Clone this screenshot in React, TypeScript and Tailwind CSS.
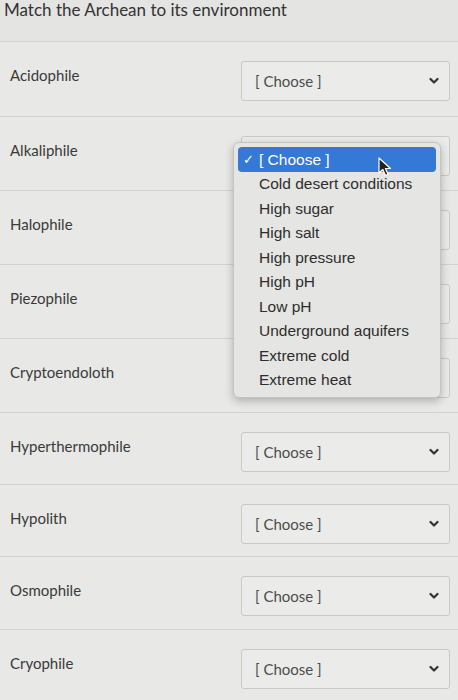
const rows = [
  { name: "Acidophile", h: "h-[75px]" },
  { name: "Alkaliphile", h: "h-[74px]" },
  { name: "Halophile", h: "h-[74px]" },
  { name: "Piezophile", h: "h-[74px]" },
  { name: "Cryptoendoloth", h: "h-[74px]" },
  { name: "Hyperthermophile", h: "h-[72px]" },
  { name: "Hypolith", h: "h-[72px]" },
  { name: "Osmophile", h: "h-[73px]" },
  { name: "Cryophile", h: "h-[73px]" },
];

const options = [
  "Cold desert conditions",
  "High sugar",
  "High salt",
  "High pressure",
  "High pH",
  "Low pH",
  "Underground aquifers",
  "Extreme cold",
  "Extreme heat",
];

function Chevron() {
  return (
    <svg width="10" height="8" viewBox="0 0 10 8" className="text-[#333]">
      <polyline points="1.5,2 5,5.5 8.5,2" fill="none" stroke="currentColor" strokeWidth="2.2" strokeLinecap="round" strokeLinejoin="round" />
    </svg>
  );
}

function Select() {
  return (
    <div className="mt-[19px] ml-auto mr-[8px] flex h-[40px] w-[209px] items-center justify-between rounded-[3px] border border-[#c9c9c6] bg-[#ebebe9] pl-[13px] pr-[10px]">
      <span className="text-[15px] text-[#4d4d4d]">[ Choose ]</span>
      <Chevron />
    </div>
  );
}

function Menu() {
  return (
    <div
      className="absolute left-[233px] top-[142px] h-[256px] w-[208px] rounded-[6px] border border-[#c4c4c2] bg-[#e5e5e3] px-[4px] pt-[4px] shadow-[0_3px_8px_rgba(0,0,0,0.25)]"
      style={{ fontFamily: '"Liberation Sans", Arial, sans-serif' }}
    >
      <div className="flex h-[24.5px] items-center rounded-[4px] bg-[#3479d6] pl-[5px] text-[15.5px] text-white">
        <span className="w-[16px] text-[13px]">✓</span>
        <span>[ Choose ]</span>
      </div>
      {options.map((o) => (
        <div key={o} className="flex h-[24.5px] items-center pl-[21px] text-[15.5px] text-[#2e2e2e]">
          {o}
        </div>
      ))}
      <svg className="absolute left-[144px] top-[14px]" width="14" height="20" viewBox="0 0 14 20">
        <path d="M1 1 L1 16 L4.8 12.5 L7.5 18.5 L10 17.3 L7.4 11.5 L12.5 11.5 Z" fill="#222" stroke="#fff" strokeWidth="1.2" strokeLinejoin="round" />
      </svg>
    </div>
  );
}

export default function App() {
  return (
    <div className="relative h-[700px] w-[458px] overflow-hidden bg-[#e8e8e6] text-[#3a3a3a]" style={{ fontFamily: "Lato, 'Open Sans', sans-serif" }}>
      <div className="h-[44px] border-b border-[#d2d2cf] bg-[#e4e4e2] pl-[4px]">
        <h1 className="-mt-[2px] text-[17px] leading-[24px] text-[#333]">Match the Archean to its environment</h1>
      </div>
      {rows.map((r) => (
        <div key={r.name} className={`flex border-b border-[#d2d2cf] ${r.h}`}>
          <div className="pl-[10px] pt-[21px] text-[15px] leading-[24px]">{r.name}</div>
          <Select />
        </div>
      ))}
      <Menu />
    </div>
  );
}
